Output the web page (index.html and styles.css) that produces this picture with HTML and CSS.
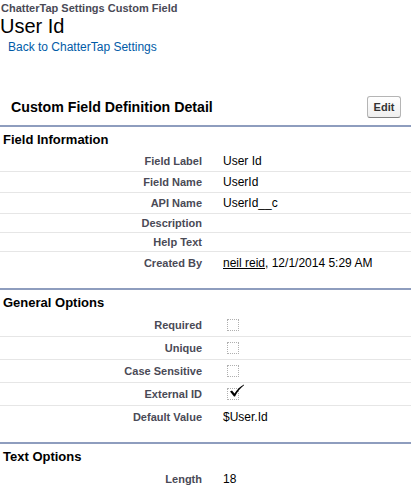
FILE: index.html
```html
<!DOCTYPE html>
<html>
<head>
<meta charset="utf-8">
<link rel="stylesheet" href="styles.css">
</head>
<body>
<div class="ptHeader">
  <div class="ptType">ChatterTap Settings Custom Field</div>
  <h1 class="ptTitle">User Id</h1>
  <a class="backLink" href="#">Back to ChatterTap Settings</a>
</div>

<div class="pbHeader">
  <h2 class="pbTitle">Custom Field Definition Detail</h2>
  <button class="btn">Edit</button>
</div>

<section class="pbSection">
  <h3 class="secTitle">Field Information</h3>
  <div class="row"><div class="lbl">Field Label</div><div class="val">User Id</div></div>
  <div class="row"><div class="lbl">Field Name</div><div class="val">UserId</div></div>
  <div class="row"><div class="lbl">API Name</div><div class="val">UserId__c</div></div>
  <div class="row short"><div class="lbl">Description</div><div class="val"></div></div>
  <div class="row short"><div class="lbl">Help Text</div><div class="val"></div></div>
  <div class="row last"><div class="lbl">Created By</div><div class="val"><a class="user" href="#">neil reid</a>, 12/1/2014 5:29 AM</div></div>
</section>

<section class="pbSection">
  <h3 class="secTitle">General Options</h3>
  <div class="row tall"><div class="lbl">Required</div><div class="val"><span class="cb"></span></div></div>
  <div class="row tall"><div class="lbl">Unique</div><div class="val"><span class="cb"></span></div></div>
  <div class="row tall"><div class="lbl">Case Sensitive</div><div class="val"><span class="cb"></span></div></div>
  <div class="row tall"><div class="lbl">External ID</div><div class="val"><span class="cb checked"><svg class="tick" width="16" height="14" viewBox="0 0 16 14"><path d="M1 7.5 L3 6.5 L5.5 9.5 C8 5.5 11 2.5 15 0.5 L15 1.3 C11.5 4 8.5 7.5 6 12.5 L5 12.5 Z" fill="#000"/></svg></span></div></div>
  <div class="row last"><div class="lbl">Default Value</div><div class="val">$User.Id</div></div>
</section>

<section class="pbSection">
  <h3 class="secTitle">Text Options</h3>
  <div class="row last"><div class="lbl">Length</div><div class="val">18</div></div>
</section>
</body>
</html>
```

FILE: styles.css
```css
html, body {
  margin: 0;
  padding: 0;
  background: #fff;
  font-family: "Liberation Sans", Arial, sans-serif;
  color: #000;
}

.ptHeader {
  padding: 2px 0 0 1px;
}

.ptType {
  font-size: 11px;
  font-weight: bold;
  line-height: 13px;
  color: #4a4a56;
}

.ptTitle {
  margin: 0 0 0 -1px;
  font-size: 20px;
  font-weight: normal;
  line-height: 22px;
  color: #000;
}

.backLink {
  display: block;
  margin: 3px 0 0 7px;
  font-size: 12px;
  line-height: 14px;
  color: #015ba7;
  text-decoration: none;
}

.pbHeader {
  display: flex;
  align-items: center;
  justify-content: space-between;
  margin-top: 40px;
  padding: 0 10px 5px 11px;
  height: 26px;
}

.pbTitle {
  margin: 0;
  font-size: 14.2px;
  font-weight: bold;
  line-height: 17px;
}

.btn {
  width: 34px;
  height: 22px;
  padding: 0;
  border: 1px solid #b5b5b5;
  border-bottom-color: #7f7f7f;
  border-radius: 3px;
  background: linear-gradient(#fff, #efefef);
  font-family: "Liberation Sans", Arial, sans-serif;
  font-size: 11px;
  font-weight: bold;
  color: #333;
}

.pbSection {
  border-top: 2px solid #8e9dbe;
  padding-bottom: 15px;
}

.secTitle {
  margin: 0;
  padding: 0 0 0 3px;
  height: 24px;
  display: flex;
  align-items: center;
  font-size: 13px;
  font-weight: bold;
  color: #000;
}

.row {
  display: flex;
  align-items: center;
  height: 20px;
  border-bottom: 1px solid #e6e6e6;
}

.row.short {
  height: 18px;
}

.row.tall {
  height: 22px;
}

.row.last {
  border-bottom: none;
  height: 21px;
}

.lbl {
  width: 202px;
  text-align: right;
  font-size: 11px;
  font-weight: bold;
  color: #4a4a56;
}

.val {
  padding-left: 21px;
  font-size: 12px;
  color: #000;
}

.user {
  color: #000;
  text-decoration: underline;
}

.cb {
  display: block;
  position: relative;
  width: 10px;
  height: 10px;
  margin-left: 4px;
  border: 1px dotted #b0b0b0;
}

.tick {
  position: absolute;
  left: 1px;
  top: -5px;
}
```
